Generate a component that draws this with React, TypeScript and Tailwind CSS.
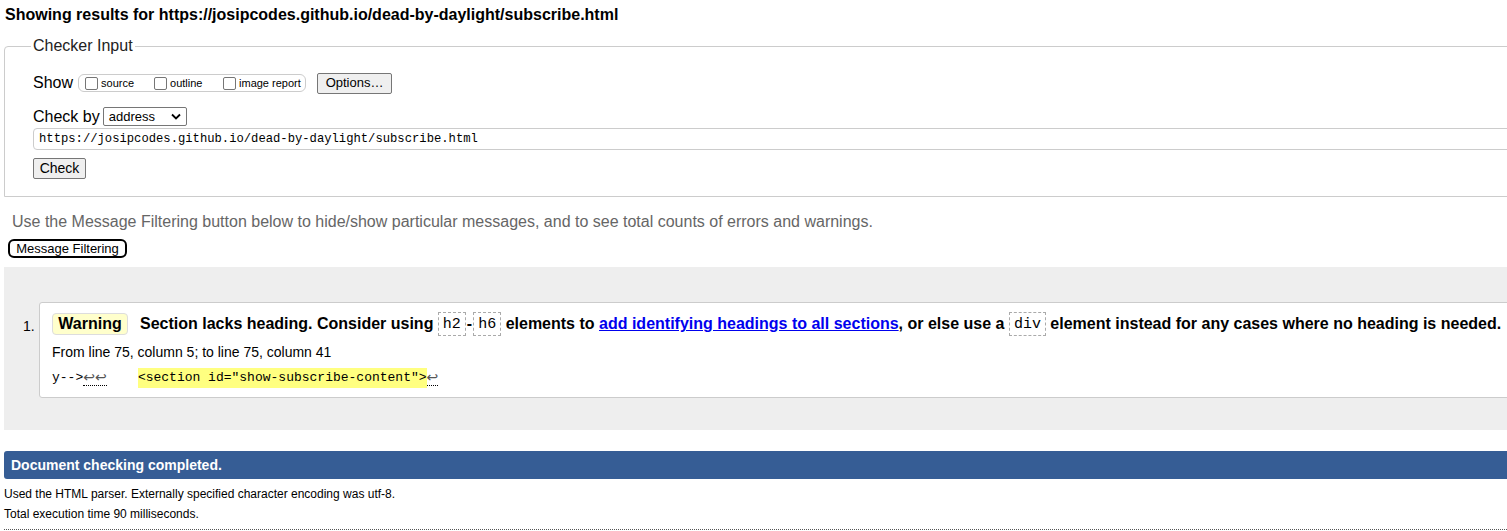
import React from "react";

const Box = ({ children }: { children: React.ReactNode }) => (
  <span className="inline-flex items-center h-[24px] px-[4px] border border-dashed border-[#aaa] font-['Liberation_Mono',monospace] font-normal text-[15px] leading-none">
    {children}
  </span>
);

const Cb = () => (
  <span className="inline-block w-[13px] h-[13px] border border-[#767676] rounded-[2px] bg-white mr-[3px]" />
);

const Ret = ({ children }: { children: React.ReactNode }) => (
  <span className="border-b border-dotted border-black leading-[15px] text-[#555] font-['DejaVu_Sans',sans-serif] text-[14px]">
    {children}
  </span>
);

export default function App() {
  return (
    <div className="w-[1507px] h-[531px] overflow-hidden bg-white text-black font-['Liberation_Sans',Arial,sans-serif]">
      <div className="h-[30px] leading-[30px] pl-[5px] text-[16px] font-bold">
        Showing results for https://josipcodes.github.io/dead-by-daylight/subscribe.html
      </div>

      <fieldset className="mt-[7px] ml-[4px] w-[1540px] border border-[#ccc] rounded-tl-[4px] pl-[26px] pb-[16px]">
        <legend className="px-[2px] text-[16px] leading-[18px] text-[#222]">Checker Input</legend>
        <div className="pl-[2px] pt-[17px] flex flex-col">
          <div className="h-[22px] flex items-center">
            <span className="text-[16px] mr-[5px]">Show</span>
            <span className="inline-flex items-center h-[18px] w-[228px] border border-[#ccc] rounded-[6px] pl-[6px] text-[11px]">
              <Cb />
              <span className="w-[53px]">source</span>
              <Cb />
              <span className="w-[53px]">outline</span>
              <Cb />
              <span>image report</span>
            </span>
            <span className="ml-[11px] inline-flex items-center justify-center w-[75px] h-[21px] bg-[#efefef] border border-[#767676] rounded-[2px] text-[13px]">
              Options…
            </span>
          </div>
          <div className="mt-[12px] h-[21px] flex items-center">
            <span className="text-[16px] mr-[3px]">Check by</span>
            <span className="inline-flex items-center justify-between w-[84px] h-[19px] border border-[#767676] rounded-[2px] pl-[5px] pr-[5px] text-[13px] bg-white">
              address
              <svg width="10" height="7" viewBox="0 0 10 7">
                <path d="M1 1.5 L5 5.5 L9 1.5" fill="none" stroke="#000" strokeWidth="1.8" />
              </svg>
            </span>
          </div>
          <div className="mt-[1px] h-[22px] w-[1520px] border border-[#ccc] rounded-[4px] flex items-center pl-[5px] font-['Liberation_Mono',monospace] text-[12.2px]">
            https://josipcodes.github.io/dead-by-daylight/subscribe.html
          </div>
          <div className="mt-[6px]">
            <span className="inline-flex items-center justify-center w-[53px] h-[21px] bg-[#efefef] border border-[#767676] rounded-[2px] text-[14px]">
              Check
            </span>
          </div>
        </div>
      </fieldset>

      <div className="mt-[15px] pl-[12px] text-[16px] leading-[20px] text-[#666]">
        Use the Message Filtering button below to hide/show particular messages, and to see total counts of errors and warnings.
      </div>
      <div className="mt-[4px] pl-[8px]">
        <span className="inline-flex items-center justify-center w-[119px] h-[19px] border-2 border-black rounded-[6px] text-[13px]">
          Message Filtering
        </span>
      </div>

      <div className="mt-[7px] ml-[4px] w-[1540px] h-[163px] bg-[#eee] pt-[35px] flex">
        <div className="w-[35px] pl-[19px] pt-[14px] text-[14px]">1.</div>
        <div className="h-[96px] flex-1 bg-white border border-[#ccc] rounded-[3px] pl-[12px] pt-[9px]">
          <div className="flex items-center h-[24px] text-[16px] font-bold whitespace-nowrap">
            <span className="inline-flex items-center justify-center w-[76px] h-[22px] bg-[#ffc] border border-[#ddd] rounded-[4px] mr-[12px]">
              Warning
            </span>
            <span>Section lacks heading. Consider using&nbsp;</span>
            <Box>h2</Box>
            <span className="mx-[1px]">-</span>
            <Box>h6</Box>
            <span>&nbsp;elements to&nbsp;</span>
            <span className="text-[#00e] underline">add identifying headings to all sections</span>
            <span>, or else use a&nbsp;</span>
            <Box>div</Box>
            <span>&nbsp;element instead for any cases where no heading is needed.</span>
          </div>
          <div className="mt-[6px] text-[14px] leading-[20px]">From line 75, column 5; to line 75, column 41</div>
          <div className="mt-[6px] text-[13px] leading-[20px] font-['Liberation_Mono',monospace] whitespace-pre flex items-center">
            <span>y--&gt;</span>
            <Ret>↩↩</Ret>
            <span>    </span>
            <span className="bg-[#ffff80]">&lt;section id="show-subscribe-content"&gt;</span>
            <Ret>↩</Ret>
          </div>
        </div>
      </div>

      <div className="mt-[21px] ml-[4px] h-[28px] bg-[#365d95] rounded-l-[3px] flex items-center pl-[7px] text-white font-bold text-[14px]">
        Document checking completed.
      </div>
      <div className="mt-[5px] pl-[4px] text-[12px] leading-[20px]">
        Used the HTML parser. Externally specified character encoding was utf-8.
      </div>
      <div className="pl-[4px] text-[12px] leading-[20px]">Total execution time 90 milliseconds.</div>
      <div className="mt-[5px] ml-[4px] border-t border-dotted border-[#555]" />
    </div>
  );
}
